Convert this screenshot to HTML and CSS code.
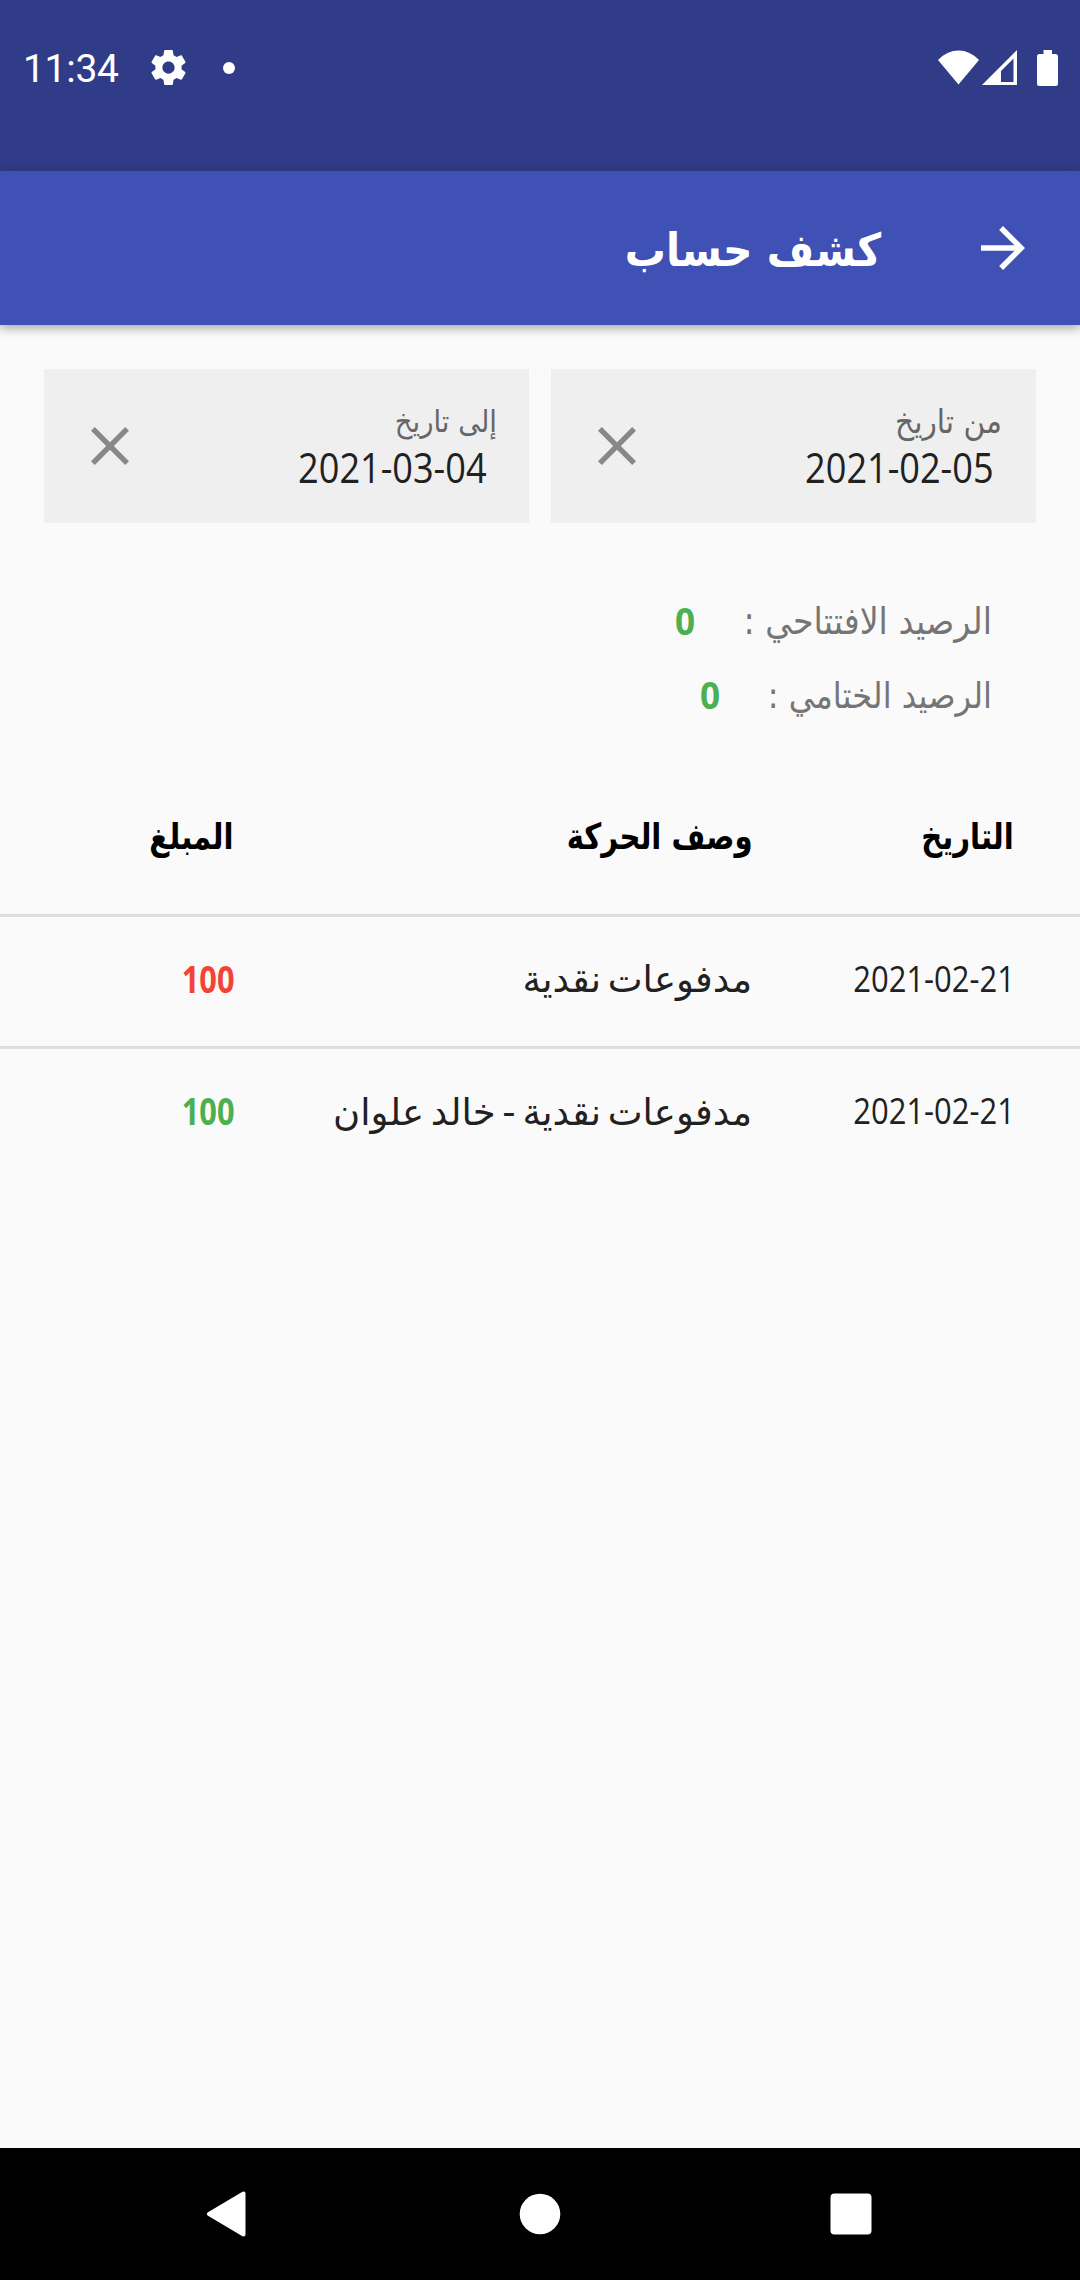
FILE: index.html
```
<!DOCTYPE html>
<html lang="ar" dir="rtl">
<head>
    <meta charset="UTF-8">
    <meta name="viewport" content="width=device-width, initial-scale=1.0">
    <title>كشف حساب</title>
    <link rel="stylesheet" href="styles.css">
</head>
<body>
    <!-- Status bar -->
    <div class="status-bar">
        <div class="status-left">
            <span class="clock">11:34</span>
            <svg class="gear" viewBox="2 2 20 20"><path fill="#fff" d="M19.43 12.98c.04-.32.07-.64.07-.98s-.03-.66-.07-.98l2.11-1.65c.19-.15.24-.42.12-.64l-2-3.46c-.12-.22-.39-.3-.61-.22l-2.49 1c-.52-.4-1.08-.73-1.69-.98l-.38-2.65C14.46 2.18 14.25 2 14 2h-4c-.25 0-.46.18-.49.42l-.38 2.65c-.61.25-1.17.59-1.69.98l-2.49-1c-.23-.09-.49 0-.61.22l-2 3.46c-.13.22-.07.49.12.64l2.11 1.65c-.04.32-.07.65-.07.98s.03.66.07.98l-2.11 1.65c-.19.15-.24.42-.12.64l2 3.46c.12.22.39.3.61.22l2.49-1c.52.4 1.08.73 1.69.98l.38 2.65c.03.24.24.42.49.42h4c.25 0 .46-.18.49-.42l.38-2.65c.61-.25 1.17-.59 1.69-.98l2.49 1c.23.09.49 0 .61-.22l2-3.46c.12-.22.07-.49-.12-.64l-2.11-1.65zM12 15.5c-1.93 0-3.5-1.57-3.5-3.5s1.57-3.5 3.5-3.5 3.5 1.57 3.5 3.5-1.57 3.5-3.5 3.5z"/></svg>
            <span class="dot"></span>
        </div>
        <div class="status-right">
            <svg class="wifi" viewBox="0 0 41 35"><path fill="#fff" d="M20.500 34.500L0 10Q9 0.500 20.500 0.500T41 10z"/></svg>
            <svg class="signal" viewBox="0 0 35 35"><path fill="#fff" fill-rule="evenodd" d="M35 0v35H0zM31.500 8.500L19 21v11h12.500z"/></svg>
            <svg class="battery" viewBox="0 0 21 36"><path fill="#fff" d="M6.500 0h8.500v4h3.500q2.500 0 2.500 2.500v27q0 2.500-2.500 2.500h-16q-2.500 0-2.500-2.500v-27q0-2.500 2.500-2.500h4z"/></svg>
        </div>
    </div>

    <!-- App bar -->
    <header class="app-bar">
        <svg class="back" viewBox="4 4 16 16"><path fill="#fff" d="M12 4l-1.410 1.410L16.170 11H4v2h12.170l-5.580 5.590L12 20l8-8z"/></svg>
        <h1>كشف حساب</h1>
    </header>

    <main>
        <div class="filters">
            <div class="field">
                <div class="field-text">
                    <span class="label from">من تاريخ</span>
                    <span class="date">2021-02-05</span>
                </div>
                <svg class="clear" viewBox="5 5 14 14"><path fill="#888" d="M19 6.410L17.590 5 12 10.590 6.410 5 5 6.410 10.590 12 5 17.590 6.410 19 12 13.410 17.590 19 19 17.590 13.410 12z"/></svg>
            </div>
            <div class="field">
                <div class="field-text">
                    <span class="label to">إلى تاريخ</span>
                    <span class="date">2021-03-04</span>
                </div>
                <svg class="clear" viewBox="5 5 14 14"><path fill="#888" d="M19 6.410L17.590 5 12 10.590 6.410 5 5 6.410 10.590 12 5 17.590 6.410 19 12 13.410 17.590 19 19 17.590 13.410 12z"/></svg>
            </div>
        </div>

        <div class="balances">
            <div class="balance"><span class="balance-label opening">الرصيد الافتتاحي :</span><span class="amount green">0</span></div>
            <div class="balance"><span class="balance-label closing">الرصيد الختامي :</span><span class="amount green">0</span></div>
        </div>

        <table class="statement">
            <thead>
                <tr>
                    <th class="col-date"><span>التاريخ</span></th>
                    <th class="col-desc"><span>وصف الحركة</span></th>
                    <th class="col-amount"><span>المبلغ</span></th>
                </tr>
            </thead>
            <tbody>
                <tr>
                    <td><span class="num">2021-02-21</span></td>
                    <td class="desc">مدفوعات نقدية</td>
                    <td><span class="amount red">100</span></td>
                </tr>
                <tr>
                    <td><span class="num">2021-02-21</span></td>
                    <td class="desc">مدفوعات نقدية - خالد علوان</td>
                    <td><span class="amount green">100</span></td>
                </tr>
            </tbody>
        </table>
    </main>

    <!-- Navigation bar -->
    <nav class="nav-bar">
        <svg viewBox="0 0 46 46"><path fill="#fff" stroke="#fff" stroke-width="4" stroke-linejoin="round" d="M37.500 2.500v41L3 23z"/></svg>
        <svg viewBox="0 0 46 46"><circle cx="23" cy="23" r="20.300" fill="#fff"/></svg>
        <svg viewBox="0 0 46 46"><rect x="2.500" y="2.500" width="41" height="41" rx="4" fill="#fff"/></svg>
    </nav>
</body>
</html>
```
FILE: styles.css
```
* {
    box-sizing: border-box;
}

body {
    margin: 0;
    height: 2280px;
    display: flex;
    flex-direction: column;
    background-color: #fafafa;
    color: #212121;
    font-family: "DejaVu Sans Condensed", "DejaVu Sans", sans-serif;
    overflow: hidden;
}

svg {
    display: block;
}

/* Status bar */
.status-bar {
    direction: ltr;
    height: 171px;
    padding: 0 22px 36px 23px;
    display: flex;
    justify-content: space-between;
    align-items: center;
    background-color: #303c87;
}

.status-left, .status-right {
    display: flex;
    align-items: center;
}

.clock {
    font-family: Roboto, sans-serif;
    font-size: 39px;
    letter-spacing: -0.3px;
    color: #fff;
    width: 128px;
    padding-top: 2px;
}

.gear {
    width: 35px;
    height: 35px;
}

.dot {
    width: 12px;
    height: 12px;
    margin-left: 37px;
    border-radius: 50%;
    background-color: #fff;
}

.wifi {
    width: 41px;
    height: 35px;
    margin-right: 3px;
}

.signal {
    width: 35px;
    height: 35px;
    margin-right: 20px;
}

.battery {
    width: 21px;
    height: 36px;
}

/* App bar */
.app-bar {
    height: 154px;
    padding: 0 55px;
    display: flex;
    align-items: center;
    gap: 100px;
    background-color: #3f51b5;
    box-shadow: 0 3px 10px rgba(0, 0, 0, 0.35);
}

.back {
    width: 44px;
    height: 44px;
}

.app-bar h1 {
    margin: 0;
    padding-top: 4px;
    font-size: 45.5px;
    color: #fff;
}

main {
    flex: 1;
}

/* Date filters */
.filters {
    display: flex;
    gap: 22px;
    padding: 44px 44px 0;
}

.field {
    flex: 1;
    height: 154px;
    padding: 0 34px 0 47px;
    display: flex;
    justify-content: space-between;
    align-items: center;
    background-color: #efefef;
}

.field-text {
    display: flex;
    flex-direction: column;
}

.label {
    font-size: 33px;
    line-height: 43px;
    color: #666;
}

.label.to {
    font-size: 30.5px;
    margin-right: -2px;
}

/* Digits are drawn slightly narrow */
.date, .amount, .num {
    display: inline-block;
    font-family: "Open Sans", sans-serif;
    transform: scaleX(0.86);
    transform-origin: right;
}

.date {
    font-size: 42px;
    line-height: 48px;
    padding-right: 10px;
    padding-bottom: 2px;
}

.clear {
    width: 38px;
    height: 38px;
}

/* Balances */
.balances {
    padding: 61px 88px 0;
}

.balance {
    height: 74px;
    display: flex;
    align-items: center;
    gap: 48px;
}

.balance-label {
    font-size: 37px;
    color: #757575;
}

.balance-label.closing {
    font-size: 35.700px;
}

.balance .amount {
    padding-bottom: 2px;
    transform: scaleX(0.95);
}

.amount {
    font-size: 37px;
    font-weight: bold;
}

.green {
    color: #4caf50;
}

.red {
    color: #f44336;
}

/* Statement table */
.statement {
    width: 100%;
    margin-top: 28px;
    border-collapse: collapse;
    table-layout: fixed;
}

.statement th, .statement td {
    height: 132px;
    padding: 0;
    text-align: right;
    white-space: nowrap;
    font-size: 36px;
}

.statement th {
    height: 155px;
    color: #000;
}

.statement th span {
    display: inline-block;
    transform: scaleX(0.9);
    transform-origin: right;
}

.statement td {
    padding-bottom: 6px;
}

.statement tbody tr {
    border-top: 3px solid #ddd;
}

.col-date {
    width: 328px;
}

.col-amount {
    width: 234px;
}

.statement th:first-child {
    padding-right: 66px;
}

.statement td:first-child {
    padding-right: 65px;
}

.num {
    font-size: 36px;
}

.statement .desc {
    padding-bottom: 3px;
    font-family: "DejaVu Sans", sans-serif;
    font-size: 37px;
    word-spacing: -5px;
}

.statement .amount {
    transform: scaleX(0.83);
}

/* Navigation bar */
.nav-bar {
    direction: ltr;
    height: 132px;
    display: flex;
    justify-content: center;
    align-items: center;
    gap: 265px;
    background-color: #000;
}

.nav-bar svg {
    width: 46px;
    height: 46px;
}
```
